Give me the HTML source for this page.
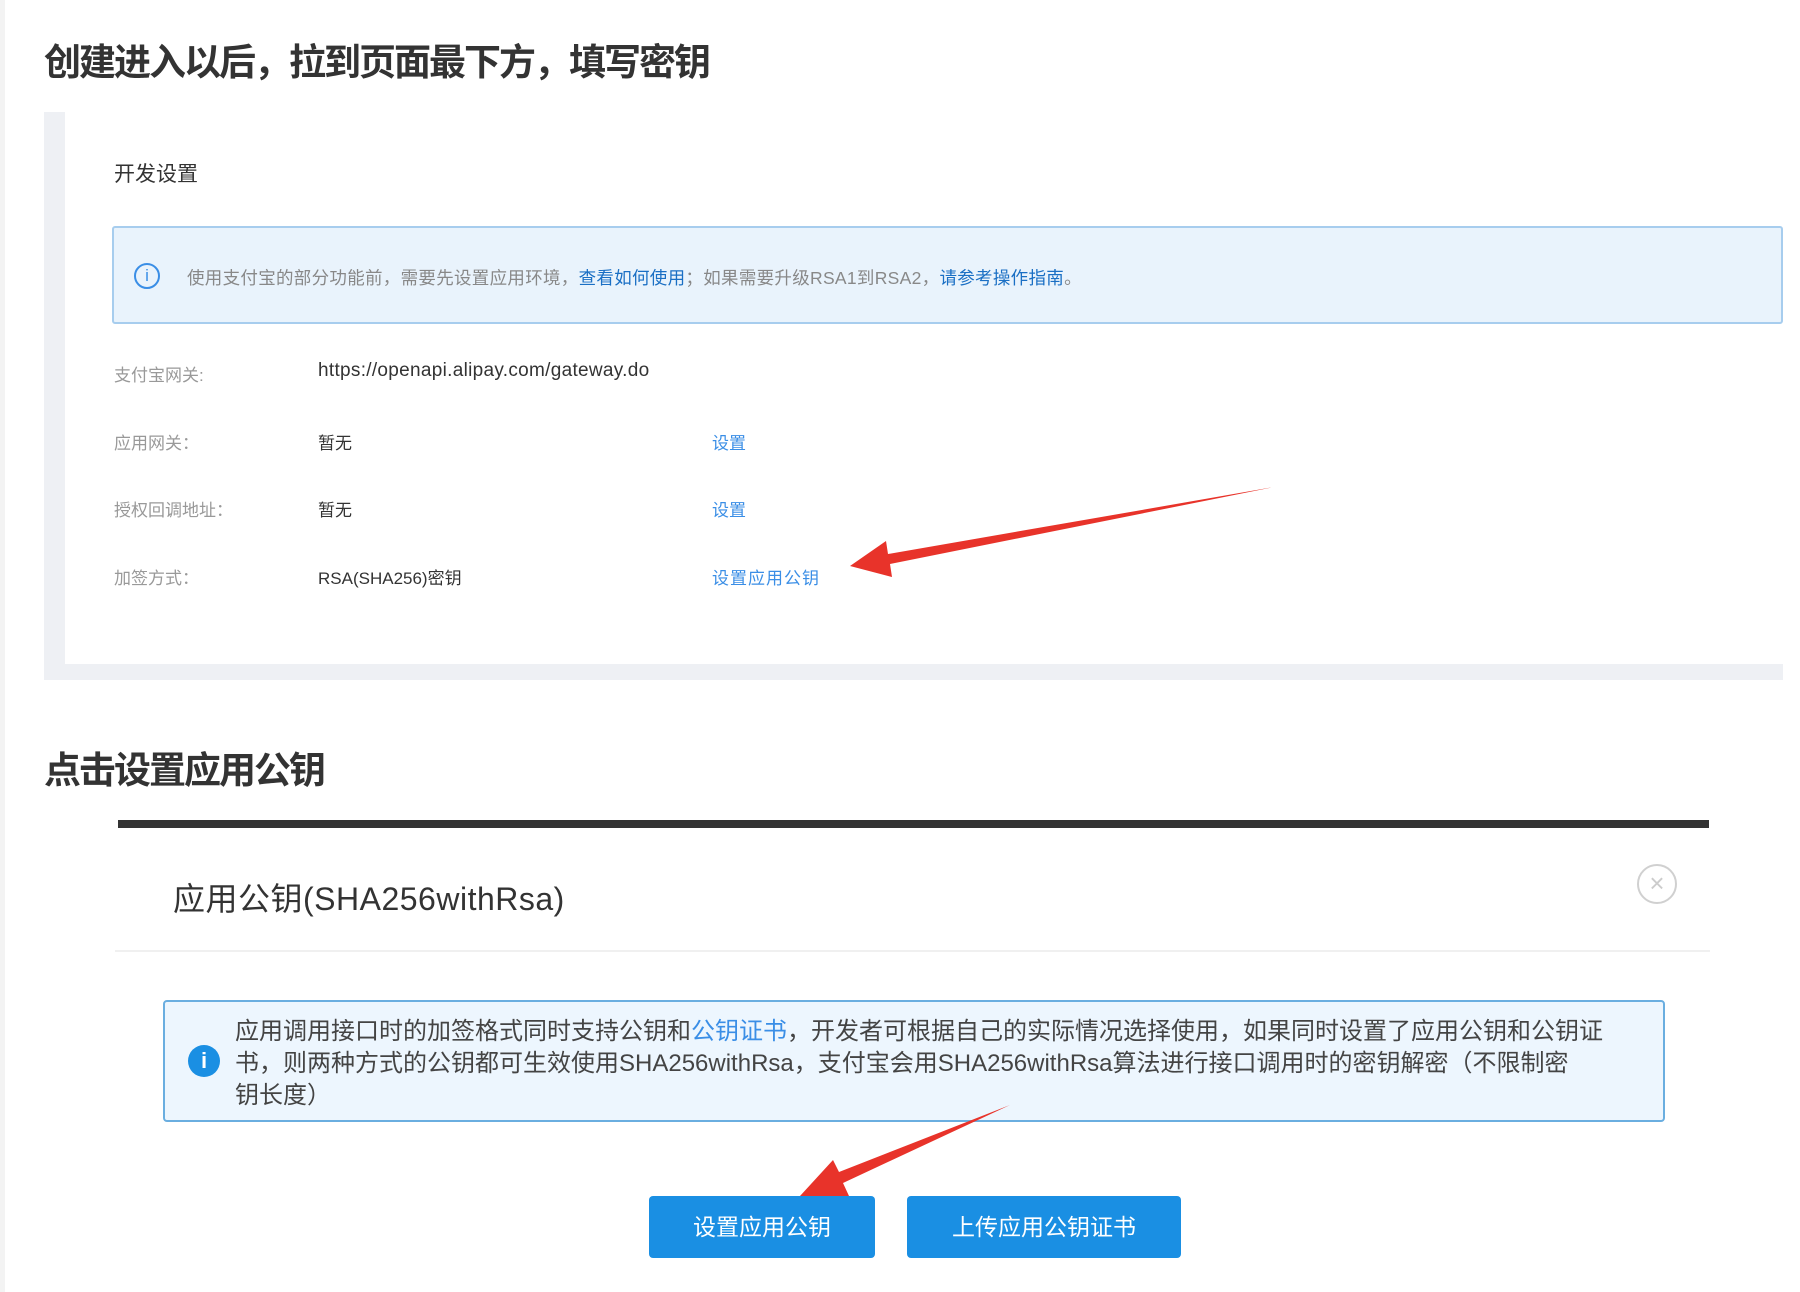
<!DOCTYPE html>
<html><head><meta charset="utf-8"><style>
*{margin:0;padding:0;box-sizing:border-box}
body{width:1800px;height:1292px;background:#fff;position:relative;overflow:hidden;font-family:"Liberation Sans","Noto Sans CJK SC",sans-serif;}
.a{position:absolute;white-space:nowrap}
h1{position:absolute;font-size:37px;letter-spacing:-2px;font-weight:bold;color:#333;white-space:nowrap;line-height:1}
.lab{color:#999;font-size:17px}
.val{color:#333;font-size:17px}
.lnk{color:#3a8ee6;font-size:17px}
</style></head><body>
<div class="a" style="left:0;top:0;width:5px;height:1292px;background:#f3f3f3"></div>
<h1 style="left:44px;top:44px">创建进入以后，拉到页面最下方，填写密钥</h1>
<div class="a" style="left:44px;top:112px;width:1739px;height:568px;background:#eef0f4"></div>
<div class="a" style="left:65px;top:112px;width:1718px;height:552px;background:#fff"></div>
<div class="a" style="left:114px;top:158px;font-size:21px;color:#333">开发设置</div>
<div class="a" style="left:112px;top:226px;width:1671px;height:98px;background:#e9f3fc;border:2px solid #a7cdee;border-radius:3px"></div>
<div class="a" style="left:134px;top:263px;width:26px;height:26px;border:2px solid #3a8ee6;border-radius:50%;color:#3a8ee6;font-size:17px;text-align:center;line-height:22px">i</div>
<div class="a" style="left:187px;top:265px;font-size:17.5px;letter-spacing:0.3px;color:#888">使用支付宝的部分功能前，需要先设置应用环境，<span style="color:#1a6fc4">查看如何使用</span>；如果需要升级RSA1到RSA2，<span style="color:#1a6fc4">请参考操作指南</span>。</div>
<div class="a lab" style="left:114px;top:361px">支付宝网关:</div>
<div class="a val" style="left:318px;top:360px;font-size:19px;letter-spacing:0.3px">https://openapi.alipay.com/gateway.do</div>
<div class="a lab" style="left:114px;top:429px">应用网关：</div>
<div class="a val" style="left:318px;top:429px">暂无</div>
<div class="a lnk" style="left:712px;top:429px">设置</div>
<div class="a lab" style="left:114px;top:496px">授权回调地址：</div>
<div class="a val" style="left:318px;top:496px">暂无</div>
<div class="a lnk" style="left:712px;top:496px">设置</div>
<div class="a lab" style="left:114px;top:564px">加签方式：</div>
<div class="a val" style="left:318px;top:564px">RSA(SHA256)密钥</div>
<div class="a lnk" style="left:712px;top:564px;letter-spacing:1px">设置应用公钥</div>
<h1 style="left:44px;top:752px">点击设置应用公钥</h1>
<div class="a" style="left:118px;top:820px;width:1591px;height:8px;background:#333"></div>
<div class="a" style="left:173px;top:874px;font-size:32px;letter-spacing:0.5px;color:#333">应用公钥(SHA256withRsa)</div>
<div class="a" style="left:1637px;top:864px;width:40px;height:40px;border:2px solid #d0d0d0;border-radius:50%;color:#ccc;font-size:26px;text-align:center;line-height:34px">×</div>
<div class="a" style="left:115px;top:950px;width:1595px;height:2px;background:#f0f0f0"></div>
<div class="a" style="left:163px;top:1000px;width:1502px;height:122px;background:#edf6fe;border:2px solid #6aaee0;border-radius:4px"></div>
<div class="a" style="left:188px;top:1045px;width:32px;height:32px;background:#1a8fe3;border-radius:50%;color:#fff;font-size:22px;font-weight:bold;text-align:center;line-height:32px">i</div>
<div class="a" style="left:235px;top:1016px;font-size:24px;line-height:32px;color:#444">应用调用接口时的加签格式同时支持公钥和<span style="color:#3a8ee6">公钥证书</span>，开发者可根据自己的实际情况选择使用，如果同时设置了应用公钥和公钥证<br>书，则两种方式的公钥都可生效使用SHA256withRsa，支付宝会用SHA256withRsa算法进行接口调用时的密钥解密（不限制密<br>钥长度）</div>
<div class="a" style="left:649px;top:1196px;width:226px;height:62px;background:#1a8fe3;border-radius:4px;color:#fff;font-size:23px;text-align:center;line-height:62px">设置应用公钥</div>
<div class="a" style="left:907px;top:1196px;width:274px;height:62px;background:#1a8fe3;border-radius:4px;color:#fff;font-size:23px;text-align:center;line-height:62px">上传应用公钥证书</div>
<svg class="a" style="left:0;top:0" width="1800" height="1292">
<polygon fill="#e8332a" points="1274,487 888,554 886,541 850,566 892,577 890,564"/>
<polygon fill="#e8332a" points="1010,1105 839,1172 833,1160 800,1196 849,1196 843,1183"/>
</svg>
</body></html>
